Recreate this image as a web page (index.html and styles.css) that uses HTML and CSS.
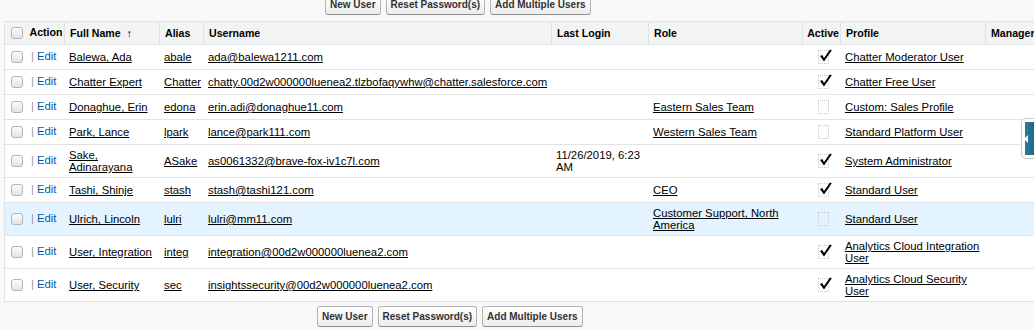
FILE: index.html
```html
<!DOCTYPE html>
<html lang="en">
<head>
  <meta charset="UTF-8" />
  <title>Users</title>
  <link rel="stylesheet" href="styles.css">
</head>
<body>

  <!-- Top buttons -->
  <div class="btn-bar top-bar">
    <button class="btn">New User</button>
    <button class="btn">Reset Password(s)</button>
    <button class="btn">Add Multiple Users</button>
  </div>

  <!-- User list -->
  <div class="list-wrap">
    <table class="list">
      <colgroup>
        <col class="c-action"><col class="c-name"><col class="c-alias"><col class="c-user">
        <col class="c-login"><col class="c-role"><col class="c-active"><col class="c-profile"><col class="c-manager">
      </colgroup>
      <thead>
        <tr>
          <th class="action-cell"><input type="checkbox" class="chk"> Action</th>
          <th>Full Name <span class="sort">↑</span></th>
          <th>Alias</th>
          <th>Username</th>
          <th>Last Login</th>
          <th>Role</th>
          <th class="active-cell">Active</th>
          <th>Profile</th>
          <th>Manager</th>
        </tr>
      </thead>
      <tbody>
        <tr>
          <td class="action-cell"><input type="checkbox" class="chk"><span class="sep">|</span><a class="edit">Edit</a></td>
          <td><a>Balewa, Ada</a></td>
          <td><a>abale</a></td>
          <td><a>ada@balewa1211.com</a></td>
          <td></td>
          <td></td>
          <td class="active-cell"><span class="tick on"></span></td>
          <td><a>Chatter Moderator User</a></td>
          <td></td>
        </tr>
        <tr>
          <td class="action-cell"><input type="checkbox" class="chk"><span class="sep">|</span><a class="edit">Edit</a></td>
          <td><a>Chatter Expert</a></td>
          <td><a>Chatter</a></td>
          <td><a>chatty.00d2w000000luenea2.tlzbofaqywhw@chatter.salesforce.com</a></td>
          <td></td>
          <td></td>
          <td class="active-cell"><span class="tick on"></span></td>
          <td><a>Chatter Free User</a></td>
          <td></td>
        </tr>
        <tr>
          <td class="action-cell"><input type="checkbox" class="chk"><span class="sep">|</span><a class="edit">Edit</a></td>
          <td><a>Donaghue, Erin</a></td>
          <td><a>edona</a></td>
          <td><a>erin.adi@donaghue11.com</a></td>
          <td></td>
          <td><a>Eastern Sales Team</a></td>
          <td class="active-cell"><span class="tick"></span></td>
          <td><a>Custom: Sales Profile</a></td>
          <td></td>
        </tr>
        <tr>
          <td class="action-cell"><input type="checkbox" class="chk"><span class="sep">|</span><a class="edit">Edit</a></td>
          <td><a>Park, Lance</a></td>
          <td><a>lpark</a></td>
          <td><a>lance@park111.com</a></td>
          <td></td>
          <td><a>Western Sales Team</a></td>
          <td class="active-cell"><span class="tick"></span></td>
          <td><a>Standard Platform User</a></td>
          <td></td>
        </tr>
        <tr>
          <td class="action-cell"><input type="checkbox" class="chk"><span class="sep">|</span><a class="edit">Edit</a></td>
          <td><a>Sake, Adinarayana</a></td>
          <td><a>ASake</a></td>
          <td><a>as0061332@brave-fox-iv1c7l.com</a></td>
          <td>11/26/2019, 6:23 AM</td>
          <td></td>
          <td class="active-cell"><span class="tick on"></span></td>
          <td><a>System Administrator</a></td>
          <td></td>
        </tr>
        <tr>
          <td class="action-cell"><input type="checkbox" class="chk"><span class="sep">|</span><a class="edit">Edit</a></td>
          <td><a>Tashi, Shinje</a></td>
          <td><a>stash</a></td>
          <td><a>stash@tashi121.com</a></td>
          <td></td>
          <td><a>CEO</a></td>
          <td class="active-cell"><span class="tick on"></span></td>
          <td><a>Standard User</a></td>
          <td></td>
        </tr>
        <tr class="hover">
          <td class="action-cell"><input type="checkbox" class="chk"><span class="sep">|</span><a class="edit">Edit</a></td>
          <td><a>Ulrich, Lincoln</a></td>
          <td><a>lulri</a></td>
          <td><a>lulri@mm11.com</a></td>
          <td></td>
          <td><a>Customer Support, North America</a></td>
          <td class="active-cell"><span class="tick"></span></td>
          <td><a>Standard User</a></td>
          <td></td>
        </tr>
        <tr>
          <td class="action-cell"><input type="checkbox" class="chk"><span class="sep">|</span><a class="edit">Edit</a></td>
          <td><a>User, Integration</a></td>
          <td><a>integ</a></td>
          <td><a>integration@00d2w000000luenea2.com</a></td>
          <td></td>
          <td></td>
          <td class="active-cell"><span class="tick on"></span></td>
          <td><a>Analytics Cloud Integration User</a></td>
          <td></td>
        </tr>
        <tr>
          <td class="action-cell"><input type="checkbox" class="chk"><span class="sep">|</span><a class="edit">Edit</a></td>
          <td><a>User, Security</a></td>
          <td><a>sec</a></td>
          <td><a>insightssecurity@00d2w000000luenea2.com</a></td>
          <td></td>
          <td></td>
          <td class="active-cell"><span class="tick on"></span></td>
          <td><a>Analytics Cloud Security User</a></td>
          <td></td>
        </tr>
      </tbody>
    </table>
  </div>

  <!-- Bottom buttons -->
  <div class="btn-bar bottom-bar">
    <button class="btn">New User</button>
    <button class="btn">Reset Password(s)</button>
    <button class="btn">Add Multiple Users</button>
  </div>

  <!-- Collapsed sidebar handle -->
  <div class="side-handle"><span class="side-arrow"></span></div>

  <script>
    // draw the checkmarks in the Active column
    document.querySelectorAll('.tick.on').forEach(t => {
      t.innerHTML = '<svg width="13" height="13" viewBox="0 0 13 13"><polygon points="1,7 3.2,6 5,9 11,0.5 12.8,1.2 5,12.5" fill="#000"/></svg>';
    });
  </script>
</body>
</html>
```

FILE: styles.css
```css
body {
  margin: 0;
  padding: 0;
  font-family: 'Liberation Sans', Arial, sans-serif;
  font-size: 11.3px;
  color: #000;
  background: #f8f8f8;
  overflow: hidden;
}

.btn-bar {
  display: flex;
  gap: 5px;
  height: 21px;
}

.top-bar {
  margin-top: -6px;
  padding-left: 325px;
}

.bottom-bar {
  margin-top: 4px;
  padding-left: 317px;
}

.btn {
  font-family: 'Liberation Sans', Arial, sans-serif;
  font-size: 10px;
  font-weight: bold;
  color: #333;
  line-height: 13px;
  padding: 3px 4px;
  border: 1px solid #b5b5b5;
  border-bottom-color: #8f8f8f;
  border-radius: 3px;
  background: linear-gradient(#ffffff, #ececec);
  margin: 0;
}

.list-wrap {
  margin-top: 6px;
  padding-left: 4px;
  overflow: hidden;
}

.list {
  table-layout: fixed;
  width: 1102px;
  border-collapse: separate;
  border-spacing: 0;
  background: #fff;
  border-top: 1px solid #e0e3e5;
  border-left: 1px solid #e0e3e5;
}

.c-action { width: 60px; }
.c-name { width: 95px; }
.c-alias { width: 44px; }
.c-user { width: 348px; }
.c-login { width: 97px; }
.c-role { width: 154px; }
.c-active { width: 38px; }
.c-profile { width: 145px; }
.c-manager { width: 121px; }

thead tr {
  height: 23px;
}

th {
  background: #f2f3f3;
  font-size: 10.6px;
  font-weight: bold;
  text-align: left;
  padding: 0 2px 0 5px;
  border-right: 1px solid #e0e3e5;
  border-bottom: 1px solid #e0e3e5;
  white-space: nowrap;
  vertical-align: middle;
  color: #000;
  overflow: hidden;
}

.sort {
  font-size: 11px;
  font-weight: normal;
  margin-left: 3px;
}

tbody tr {
  height: 25px;
}

td {
  padding: 4px 2px 4px 4px;
  line-height: 12px;
  border-bottom: 1px solid #e3e3e3;
  vertical-align: middle;
  overflow: hidden;
}

tbody tr.hover td {
  background: #e3f3ff;
}

td a {
  color: #000;
  text-decoration: underline;
}

.action-cell {
  padding-left: 6px;
  white-space: nowrap;
}

th.action-cell {
  padding-left: 6px;
}

.chk {
  appearance: none;
  -webkit-appearance: none;
  width: 12px;
  height: 12px;
  margin: 0 4px 0 0;
  border: 1px solid #b4b4b4;
  border-radius: 3px;
  background: linear-gradient(#fcfcfc, #e4e4e4);
  vertical-align: middle;
  position: relative;
  top: -1px;
}

td .chk {
  margin-right: 5px;
}

.sep {
  color: #999;
  margin: 0 3px 0 3px;
}

td a.edit {
  color: #015ba7;
  text-decoration: none;
}

th.active-cell {
  text-align: right;
  padding: 0 1px 0 0;
}

td.active-cell {
  text-align: center;
  padding: 0 0 0 2px;
}

.tick {
  display: inline-block;
  position: relative;
  width: 9px;
  height: 12px;
  border: 1px dotted #c8c8c8;
  vertical-align: middle;
}

.tick svg {
  position: absolute;
  left: 0;
  top: -2px;
}

.side-handle {
  position: absolute;
  left: 1021px;
  top: 118px;
  width: 20px;
  height: 41px;
  background: #fff;
  border: 1px solid #c9c9c9;
  border-radius: 5px;
  box-sizing: border-box;
}

.side-handle::before {
  content: "";
  position: absolute;
  left: 3px;
  top: 3px;
  right: 0;
  bottom: 3px;
  background: linear-gradient(90deg, #2a7c99, #1a5f7a);
}

.side-arrow {
  position: absolute;
  left: 2px;
  top: 16px;
  width: 0;
  height: 0;
  border-top: 4px solid transparent;
  border-bottom: 4px solid transparent;
  border-right: 4px solid #fff;
  z-index: 1;
}
```
